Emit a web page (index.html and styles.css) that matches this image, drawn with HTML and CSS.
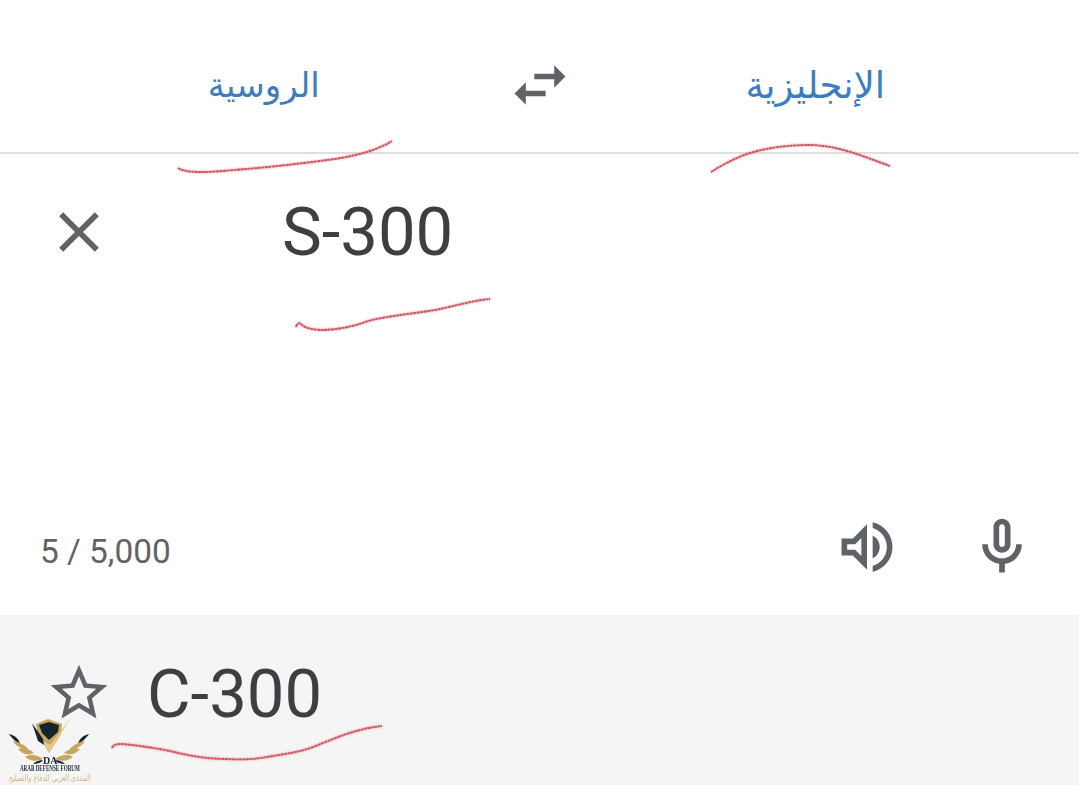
FILE: index.html
```html
<!DOCTYPE html>
<html lang="ar">
<head>
  <meta charset="UTF-8" />
  <meta name="viewport" content="width=device-width, initial-scale=1.0"/>
  <title>Translate</title>
  <link rel="stylesheet" href="styles.css">
</head>
<body>
  <div class="page">
    <header class="lang-bar">
      <div class="lang" dir="rtl">الروسية</div>
      <svg class="icon" viewBox="0 0 24 24"><path d="M6.99 11L3 15l3.99 4v-3H14v-2H6.99v-3zM21 9l-3.99-4v3H10v2h7.01v3L21 9z"/></svg>
      <div class="lang lang-long" dir="rtl">الإنجليزية</div>
    </header>

    <section class="source">
      <div class="source-row">
        <svg class="icon" viewBox="0 0 24 24"><path d="M19 6.41L17.59 5 12 10.59 6.41 5 5 6.41 10.59 12 5 17.59 6.41 19 12 13.41 17.59 19 19 17.59 13.41 12z"/></svg>
        <div class="big-text" dir="ltr">S-300</div>
      </div>
      <div class="source-foot">
        <span class="count" dir="ltr">5 / 5,000</span>
        <div class="actions">
          <svg class="icon" viewBox="0 0 24 24"><path d="M3 9v6h4l5 5V4L7 9H3zm7-.17v6.34L7.83 13H5v-2h2.83L10 8.83zM16.5 12c0-1.77-1.02-3.29-2.5-4.03v8.05c1.48-.73 2.5-2.25 2.5-4.02zM14 3.23v2.06c2.89.86 5 3.54 5 6.71s-2.11 5.85-5 6.71v2.06c4.01-.91 7-4.49 7-8.77 0-4.28-2.99-7.86-7-8.77z"/></svg>
          <svg class="icon" viewBox="0 0 24 24"><path d="M12 14c1.66 0 3-1.34 3-3V5c0-1.66-1.34-3-3-3S9 3.34 9 5v6c0 1.66 1.34 3 3 3zm-1-9c0-.55.45-1 1-1s1 .45 1 1v6c0 .55-.45 1-1 1s-1-.45-1-1V5zm6 6c0 2.76-2.24 5-5 5s-5-2.24-5-5H5c0 3.53 2.61 6.43 6 6.92V21h2v-3.08c3.39-.49 6-3.39 6-6.92h-2z"/></svg>
        </div>
      </div>
    </section>

    <section class="result">
      <svg class="icon star" viewBox="0 0 24 24"><path d="M22 9.24l-7.19-.62L12 2 9.19 8.63 2 9.24l5.46 4.73L5.82 21 12 17.27 18.18 21l-1.63-7.03L22 9.24zM12 15.4l-3.76 2.27 1-4.28-3.32-2.88 4.38-.38L12 6.1l1.71 4.04 4.38.38-3.32 2.88 1 4.28L12 15.4z"/></svg>
      <div class="big-text" dir="ltr">C-300</div>
    </section>

    <!-- hand drawn red marks on top of the screenshot -->
    <svg class="marks" viewBox="0 0 1079 785">
      <path d="M178 168C184 172 198 173 222 171C262 168 298 164 327 160C352 157 376 151 392 141"/>
      <path d="M711 172C722 165 735 158 750 153C770 147 790 145 812 145C840 146 865 157 890 166"/>
      <path d="M296 327C297 324 299 322 301 324C305 328 310 329 320 330C335 330 352 327 365 322C380 317 410 314 435 310C455 306 475 300 490 299"/>
      <path d="M112 748C113 745 116 744 122 744C135 745 155 748 170 751C190 756 208 759 227 759C245 760 255 759 267 757C285 754 300 752 313 747C328 741 342 735 353 732C363 729 372 727 382 726"/>
    </svg>

    <div class="logo">
      <svg class="logo-art" viewBox="0 0 100 55">
        <path class="gold" d="M36 14L48 9 62 14 61 24 53 37 49 43 42 31 38 25z"/>
        <path class="navy" d="M39 15L49 12 59 15 58 22 49 30 42 23z"/>
        <path class="gold-light" d="M71 7L49 43 42 30 50 35 60 22z"/>
        <path class="navy" d="M32 13L43 29 44 35 38 31z"/>
        <path class="navy" d="M9 24C14 25 18 28 20 33 15 32 12 28 9 24z"/>
        <path class="gold" d="M13 31C19 32 25 35 28 39 22 40 16 36 13 31zM18 39C24 37 31 40 34 43 28 46 22 44 18 39zM25 47C31 43 39 46 43 49 36 52 30 51 25 47z"/>
        <path class="navy" d="M33 54C36 51 40 50 43 50 41 53 37 54 33 54z"/>
        <path class="navy" d="M89 24C84 25 80 28 78 33 83 32 86 28 89 24z"/>
        <path class="gold" d="M85 31C79 32 73 35 70 39 76 40 82 36 85 31zM80 39C74 37 67 40 64 43 70 46 76 44 80 39zM73 47C67 43 59 46 55 49 62 52 68 51 73 47z"/>
        <path class="navy" d="M65 54C62 51 58 50 55 50 57 53 61 54 65 54z"/>
      </svg>
      <span class="logo-mark" dir="ltr">DA</span>
      <span class="logo-en" dir="ltr">ARAB DEFENSE FORUM</span>
      <span class="logo-ar" dir="rtl">المنتدى العربي للدفاع والتسليح</span>
    </div>
  </div>
</body>
</html>
```

FILE: styles.css
```css
html, body {
  margin: 0;
  height: 100%;
  overflow: hidden;
}
body {
  background-color: white;
  font-family: Roboto, sans-serif;
  color: #3c4043;
}
.page {
  position: relative;
  width: 1079px;
  height: 785px;
  display: flex;
  flex-direction: column;
}
.icon {
  display: block;
  flex: none;
  width: 68px;
  height: 68px;
  fill: #5f6368;
}
.lang-bar {
  height: 152px;
  display: grid;
  grid-template-columns: 1fr 24px 1fr;
  justify-items: center;
  align-items: center;
  border-bottom: 2px solid #dedfe0;
}
.lang-bar > * {
  transform: translateY(9px);
}
.lang {
  font-family: "DejaVu Sans", sans-serif;
  font-size: 34px;
  color: #3b7dbf;
}
.lang-long {
  font-size: 37px;
}
.source {
  flex: 1;
  display: flex;
  flex-direction: column;
  justify-content: space-between;
  padding: 44px 43px 34px 40px;
}
.source-row {
  display: flex;
  align-items: center;
  gap: 169px;
  margin-left: 5px;
}
.big-text {
  font-size: 67px;
  line-height: 68px;
}
.source-foot {
  display: flex;
  align-items: center;
  justify-content: space-between;
}
.count {
  font-size: 33.4px;
  color: #5f6368;
  padding-top: 8px;
}
.actions {
  display: flex;
  gap: 67px;
}
.result {
  height: 170px;
  box-sizing: border-box;
  background-color: #f5f5f5;
  display: flex;
  align-items: flex-start;
  gap: 34px;
  padding: 45px 0 0 45px;
}
.star {
  margin-top: -1px;
}
.marks {
  position: absolute;
  left: 0;
  top: 0;
  width: 1079px;
  height: 785px;
  fill: none;
  stroke: #cb5561;
  stroke-width: 1.9;
  stroke-dasharray: 3 0.5;
  filter: drop-shadow(0 0 1.2px rgba(235, 90, 110, 0.7));
  pointer-events: none;
}
.logo {
  position: absolute;
  left: 0;
  top: 710px;
  width: 100px;
  display: flex;
  flex-direction: column;
  align-items: center;
  filter: blur(0.3px);
}
.logo-art {
  display: block;
  width: 100px;
  height: 55px;
}
.logo .gold { fill: #c9a45c; }
.logo .gold-light { fill: #e0c98f; }
.logo .navy { fill: #15242f; }
.logo-mark {
  position: absolute;
  top: 46px;
  left: 43px;
  font-family: "Liberation Serif", serif;
  font-size: 10px;
  line-height: 10px;
  font-weight: bold;
  color: #15242f;
}
.logo-en {
  font-family: "Liberation Serif", serif;
  font-size: 8px;
  line-height: 8px;
  font-weight: bold;
  color: #1f2a35;
  white-space: nowrap;
  transform: scaleX(0.64);
}
.logo-ar {
  margin-top: 1px;
  font-family: "DejaVu Sans", sans-serif;
  font-size: 9px;
  line-height: 9px;
  color: #d0b587;
  white-space: nowrap;
  transform: scaleX(0.71);
}
```
